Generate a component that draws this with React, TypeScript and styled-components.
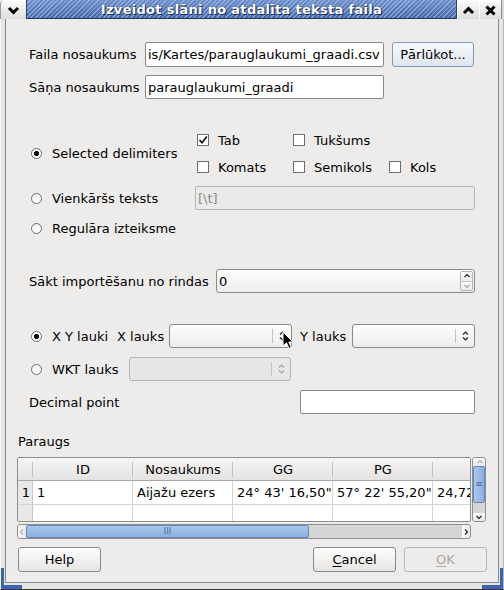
import styled, { createGlobalStyle } from "styled-components";
import { Fragment } from "react";

const GlobalStyle = createGlobalStyle`
  html, body { margin: 0; padding: 0; background: #ffffff; }
  body {
    font-family: "DejaVu Sans", "Liberation Sans", sans-serif;
    font-size: 13px;
    color: #000;
  }
  * { box-sizing: border-box; }
`;

const Window = styled.div`
  position: relative;
  width: 504px;
  height: 590px;
  display: flex;
  flex-direction: column;
  overflow: hidden;
`;

/* ---------- title bar ---------- */

const TitleBar = styled.div`
  display: flex;
  height: 19px;
  flex: none;
  background: #e4e3e1;
`;

const TitleButton = styled.div<{ $w: number; $first?: boolean }>`
  width: ${(p) => p.$w}px;
  height: 19px;
  display: flex;
  align-items: center;
  justify-content: center;
  background: linear-gradient(#fafafa, #dedddb);
  border-top: 1px solid #ffffff;
  border-left: 1px solid ${(p) => (p.$first ? "#9a9a9a" : "#ffffff")};
  border-top-left-radius: ${(p) => (p.$first ? "5px" : "0")};
`;

const TitleStripe = styled.div`
  flex: 1;
  height: 19px;
  display: flex;
  align-items: center;
  justify-content: center;
  border-left: 1px solid #23417a;
  border-right: 1px solid #23417a;
  border-bottom: 1px solid #1d3666;
  background:
    repeating-linear-gradient(135deg, rgba(255, 255, 255, 0) 0 2px, rgba(170, 195, 238, 0.6) 2px 3.2px),
    linear-gradient(#6f8fca, #4467a6);
  color: #ffffff;
  font-weight: bold;
  font-size: 13px;
  letter-spacing: 0.3px;
  text-shadow: 0 0 1px #17294d, 1px 1px 0 #1a2d55;
`;

const TitleEdge = styled.div`
  width: 3px;
  background: #d8d7d5;
  border-left: 1px solid #8d8d8d;
`;

/* ---------- frame and body ---------- */

const Frame = styled.div`
  position: relative;
  flex: 1;
  display: flex;
  padding: 0 4px 6px;
  background: #e6e5e3;
  border-left: 1px solid #f6f6f5;
  border-right: 1px solid #b8b7b5;
  border-bottom: 1px solid #3a3a3a;
`;

const Corner = styled.div<{ $side: "left" | "right" }>`
  position: absolute;
  bottom: 0;
  ${(p) => p.$side}: 0;
  width: 21px;
  height: 21px;
  border-bottom: 4px solid #3c63ad;
  border-${(p) => p.$side}: 3px solid #3c63ad;
`;

const Body = styled.div`
  flex: 1;
  display: flex;
  flex-direction: column;
  padding: 0 11px;
  background: #edeceb;
  border: 1px solid #8a8987;
  border-top: none;
`;

const Form = styled.div`
  display: flex;
  flex-direction: column;
  padding: 0 12px;
`;

const Row = styled.div<{ $top: number; $h: number }>`
  display: flex;
  align-items: center;
  margin-top: ${(p) => p.$top}px;
  height: ${(p) => p.$h}px;
`;

const Label = styled.span<{ $w?: number }>`
  flex: none;
  width: ${(p) => (p.$w ? `${p.$w}px` : "auto")};
  white-space: nowrap;
`;

const TextField = styled.div<{ $w?: number; $disabled?: boolean; $bare?: boolean }>`
  flex: ${(p) => (p.$w ? "none" : "1")};
  width: ${(p) => (p.$w ? `${p.$w}px` : "auto")};
  height: 100%;
  display: flex;
  align-items: center;
  padding: 0 4px 0 2px;
  overflow: hidden;
  white-space: nowrap;
  background: ${(p) => (p.$bare ? "transparent" : p.$disabled ? "#ebeae8" : "#ffffff")};
  border: ${(p) => (p.$bare ? "none" : `1px solid ${p.$disabled ? "#b6b5b3" : "#8b8a88"}`)};
  border-radius: 2px;
  color: ${(p) => (p.$disabled ? "#8d8c8a" : "#000")};
`;

const PushButton = styled.div<{ $w: number; $disabled?: boolean; $hover?: boolean }>`
  flex: none;
  width: ${(p) => p.$w}px;
  height: 100%;
  display: flex;
  align-items: center;
  justify-content: center;
  border: 1px solid ${(p) => (p.$disabled ? "#b9b8b6" : p.$hover ? "#8498b8" : "#8a8987")};
  border-radius: 3px;
  background: ${(p) =>
    p.$disabled
      ? "#edecea"
      : p.$hover
      ? "linear-gradient(#f7f9fc, #dfe5ee)"
      : "linear-gradient(#fdfdfd, #e6e5e3)"};
  color: ${(p) => (p.$disabled ? "#a9a8a6" : "#000")};
  u { text-decoration-thickness: 1px; text-underline-offset: 2px; }
`;

const Gap = styled.div<{ $w: number }>`
  flex: none;
  width: ${(p) => p.$w}px;
`;

/* ---------- radios and checkboxes ---------- */

const Choice = styled.span<{ $w?: number }>`
  flex: none;
  width: ${(p) => (p.$w ? `${p.$w}px` : "auto")};
  display: inline-flex;
  align-items: center;
  gap: 10px;
  padding-left: 2px;
  white-space: nowrap;
`;

const RadioDot = styled.span<{ $on?: boolean }>`
  flex: none;
  width: 11px;
  height: 11px;
  border-radius: 50%;
  border: 1px solid #6f6e6c;
  background: ${(p) =>
    p.$on
      ? "radial-gradient(circle, #111 0 2.3px, #ffffff 2.9px)"
      : "linear-gradient(#f2f2f2, #ffffff)"};
`;

const Box = styled.span`
  flex: none;
  width: 12px;
  height: 12px;
  display: flex;
  align-items: center;
  justify-content: center;
  border: 1px solid #6f6e6c;
  background: #ffffff;
`;

const Check = styled(Choice)`
  gap: 9px;
  padding-left: 0;
`;

const DelimGrid = styled.div`
  display: grid;
  grid-template-columns: 168px 96px 96px auto;
  grid-template-rows: 20px 20px;
  row-gap: 7px;
  align-items: center;
  margin-top: 31px;
`;

const SpanRows = styled.div`
  grid-row: 1 / span 2;
  grid-column: 1;
`;

/* ---------- combo and spin boxes ---------- */

const Combo = styled.div<{ $w?: number; $disabled?: boolean }>`
  flex: ${(p) => (p.$w ? "none" : "1")};
  width: ${(p) => (p.$w ? `${p.$w}px` : "auto")};
  height: 100%;
  display: flex;
  border: 1px solid ${(p) => (p.$disabled ? "#b6b5b3" : "#8b8a88")};
  border-radius: 3px;
  background: ${(p) => (p.$disabled ? "#e8e7e5" : "linear-gradient(#fdfdfd, #ededec)")};
`;

const ComboValue = styled.div`
  flex: 1;
  display: flex;
`;

const ComboArrow = styled.div`
  width: 19px;
  margin: 4px 0;
  border-left: 1px solid #c4c3c1;
  display: flex;
  align-items: center;
  justify-content: center;
`;

const SpinArrows = styled.div`
  width: 13px;
  margin: 1px 1px 1px 0;
  display: flex;
  flex-direction: column;
  border: 1px solid #b4b3b1;
  border-radius: 2px;
`;

const SpinHalf = styled.div<{ $lower?: boolean }>`
  flex: 1;
  display: flex;
  align-items: center;
  justify-content: center;
  background: linear-gradient(#fbfbfb, #ecebea);
  border-top: ${(p) => (p.$lower ? "1px solid #c9c8c6" : "none")};
`;

/* ---------- preview table ---------- */

const Caption = styled.div`
  margin-top: 19px;
  height: 16px;
  padding-left: 1px;
  display: flex;
  align-items: center;
`;

const TableRow = styled.div`
  display: flex;
  gap: 1px;
  margin-top: 8px;
  height: 65px;
`;

const TableView = styled.div`
  width: 454px;
  height: 100%;
  overflow: hidden;
  border: 1px solid #8f8e8c;
  border-radius: 2px;
  background: #ffffff;
`;

const Grid = styled.div`
  display: grid;
  grid-template-columns: 15px repeat(5, 100px);
  grid-template-rows: 23px 24px 48px;
`;

const HeadCell = styled.div`
  position: relative;
  display: flex;
  align-items: center;
  justify-content: center;
  white-space: nowrap;
  overflow: hidden;
  background: linear-gradient(#f6f5f4, #e4e3e1);
  border-bottom: 1px solid #a9a8a6;
  &::after {
    content: "";
    position: absolute;
    right: 0;
    top: 4px;
    bottom: 3px;
    width: 1px;
    background: #c3c2c0;
  }
`;

const RowHead = styled.div`
  display: flex;
  align-items: center;
  justify-content: flex-end;
  padding-right: 2px;
  background: #e9e8e6;
  border-right: 1px solid #c8c7c5;
  border-bottom: 1px solid #d5d4d2;
`;

const Cell = styled.div`
  display: flex;
  align-items: center;
  padding-left: 4px;
  white-space: nowrap;
  overflow: hidden;
  border-right: 1px solid #d5d4d2;
  border-bottom: 1px solid #d5d4d2;
`;

const VScroll = styled.div`
  width: 14px;
  height: 100%;
  display: flex;
  flex-direction: column;
  border: 1px solid #8f8e8c;
  border-radius: 3px;
  background: #d6d5d3;
  overflow: hidden;
`;

const HScroll = styled.div`
  width: 454px;
  height: 15px;
  margin-top: 2px;
  display: flex;
  border: 1px solid #8f8e8c;
  border-radius: 3px;
  background: #d6d5d3;
  overflow: hidden;
`;

const ScrollStep = styled.div<{ $size: number; $vertical?: boolean }>`
  flex: none;
  ${(p) => (p.$vertical ? "height" : "width")}: ${(p) => p.$size}px;
  display: flex;
  align-items: center;
  justify-content: center;
  background: linear-gradient(${(p) => (p.$vertical ? "90deg" : "180deg")}, #fbfbfb, #e9e8e6);
`;

const Thumb = styled.div<{ $size: number; $vertical?: boolean }>`
  flex: none;
  ${(p) => (p.$vertical ? "height" : "width")}: ${(p) => p.$size}px;
  display: flex;
  align-items: center;
  justify-content: center;
  border: 1px solid #6389c2;
  border-radius: 2px;
  background: linear-gradient(${(p) => (p.$vertical ? "90deg" : "180deg")}, #abc6ea, #8cafdf);
  color: #4c6fa6;
  font-size: 9px;
  line-height: 1;
`;

const Track = styled.div`
  flex: 1;
  background: #d6d5d3;
`;

/* ---------- dialog buttons ---------- */

const ButtonBar = styled.div`
  display: flex;
  gap: 8px;
  height: 25px;
  margin-top: 8px;
  padding-left: 1px;
`;

const Spacer = styled.div`
  flex: 1;
`;

const Pointer = styled.svg`
  position: absolute;
  left: 282px;
  top: 331px;
`;

/* ---------- small drawings ---------- */

const Chevron = ({ up }: { up?: boolean }) => (
  <svg width="13" height="9" viewBox="0 0 13 9">
    <path
      d={up ? "M2 7 L6.5 2.5 L11 7" : "M2 2 L6.5 6.5 L11 2"}
      fill="none"
      stroke="#000"
      strokeWidth="3"
    />
  </svg>
);

const CloseMark = () => (
  <svg width="11" height="11" viewBox="0 0 11 11">
    <path d="M1.5 1.5 L9.5 9.5 M9.5 1.5 L1.5 9.5" stroke="#000" strokeWidth="3" />
  </svg>
);

const UpDown = ({ color = "#222" }: { color?: string }) => (
  <svg width="7" height="12" viewBox="0 0 7 12">
    <path d="M1 4.5 L3.5 2 L6 4.5 M1 7.5 L3.5 10 L6 7.5" fill="none" stroke={color} strokeWidth="1.2" />
  </svg>
);

const Arrow = ({ dir, color = "#333" }: { dir: "up" | "down" | "left" | "right"; color?: string }) => {
  const d = {
    up: "M1.5 5 L4 2.5 L6.5 5",
    down: "M1.5 3 L4 5.5 L6.5 3",
    left: "M5 1.5 L2.5 4 L5 6.5",
    right: "M3 1.5 L5.5 4 L3 6.5",
  }[dir];
  return (
    <svg width="8" height="8" viewBox="0 0 8 8">
      <path d={d} fill="none" stroke={color} strokeWidth="1.2" />
    </svg>
  );
};

const Tick = () => (
  <svg width="10" height="10" viewBox="0 0 10 10">
    <path d="M1.5 5 L4 7.8 L8.8 1.5" fill="none" stroke="#111" strokeWidth="1.6" />
  </svg>
);

const Radio = ({ on, w, children }: { on?: boolean; w?: number; children: React.ReactNode }) => (
  <Choice $w={w}>
    <RadioDot $on={on} />
    {children}
  </Choice>
);

const CheckItem = ({ on, children }: { on?: boolean; children: React.ReactNode }) => (
  <Check>
    <Box>{on && <Tick />}</Box>
    {children}
  </Check>
);

const columns = ["", "ID", "Nosaukums", "GG", "PG", ""];
const rows = [
  ["1", "1", "Aijažu ezers", "24° 43' 16,50\"", "57° 22' 55,20\"", "24,72125"],
  ["2", "2", "Ālūksnes ezers", "27° 03' 01,10\"", "57° 25' 13,80\"", "27,05031"],
];

export default function App() {
  return (
    <>
      <GlobalStyle />
      <Window>
        <TitleBar>
          <TitleButton $w={26} $first>
            <Chevron />
          </TitleButton>
          <TitleStripe>Izveidot slāni no atdalīta teksta faila</TitleStripe>
          <TitleButton $w={22}>
            <Chevron up />
          </TitleButton>
          <TitleButton $w={22}>
            <CloseMark />
          </TitleButton>
          <TitleEdge />
        </TitleBar>

        <Frame>
          <Corner $side="left" />
          <Corner $side="right" />
          <Body>
            <Form>
              <Row $top={23} $h={25}>
                <Label $w={116}>Faila nosaukums</Label>
                <TextField $w={239}>is/Kartes/parauglaukumi_graadi.csv</TextField>
                <Gap $w={8} />
                <PushButton $w={82} $hover>
                  Pārlūkot...
                </PushButton>
              </Row>
              <Row $top={8} $h={24}>
                <Label $w={116}>Sāņa nosaukums</Label>
                <TextField $w={239}>parauglaukumi_graadi</TextField>
              </Row>

              <DelimGrid>
                <SpanRows>
                  <Radio on>Selected delimiters</Radio>
                </SpanRows>
                <CheckItem on>Tab</CheckItem>
                <CheckItem>Tukšums</CheckItem>
                <span />
                <CheckItem>Komats</CheckItem>
                <CheckItem>Semikols</CheckItem>
                <CheckItem>Kols</CheckItem>
              </DelimGrid>

              <Row $top={9} $h={24}>
                <Radio w={166}>Vienkāršs teksts</Radio>
                <TextField $disabled>[\t]</TextField>
              </Row>
              <Row $top={8} $h={20}>
                <Radio>Regulāra izteiksme</Radio>
              </Row>

              <Row $top={31} $h={24}>
                <Label $w={187}>Sākt importēšanu no rindas</Label>
                <Combo>
                  <ComboValue>
                    <TextField $bare>0</TextField>
                  </ComboValue>
                  <SpinArrows>
                    <SpinHalf>
                      <Arrow dir="up" color="#222" />
                    </SpinHalf>
                    <SpinHalf $lower>
                      <Arrow dir="down" color="#a6a5a3" />
                    </SpinHalf>
                  </SpinArrows>
                </Combo>
              </Row>

              <Row $top={31} $h={24}>
                <Radio on w={88}>
                  X Y lauki
                </Radio>
                <Label $w={52}>X lauks</Label>
                <Combo $w={123}>
                  <ComboValue />
                  <ComboArrow>
                    <UpDown />
                  </ComboArrow>
                </Combo>
                <Gap $w={8} />
                <Label $w={52}>Y lauks</Label>
                <Combo>
                  <ComboValue />
                  <ComboArrow>
                    <UpDown />
                  </ComboArrow>
                </Combo>
              </Row>
              <Row $top={9} $h={24}>
                <Radio w={100}>WKT lauks</Radio>
                <Combo $w={162} $disabled>
                  <ComboValue />
                  <ComboArrow>
                    <UpDown color="#a3a2a0" />
                  </ComboArrow>
                </Combo>
              </Row>
              <Row $top={9} $h={24}>
                <Label $w={271}>Decimal point</Label>
                <TextField />
              </Row>
            </Form>

            <Caption>Paraugs</Caption>
            <TableRow>
              <TableView>
                <Grid>
                  {columns.map((c, i) => (
                    <HeadCell key={i}>{c}</HeadCell>
                  ))}
                  {rows.map((r, ri) => (
                    <Fragment key={ri}>
                      <RowHead>{r[0]}</RowHead>
                      {r.slice(1).map((v, ci) => (
                        <Cell key={ci}>{v}</Cell>
                      ))}
                    </Fragment>
                  ))}
                </Grid>
              </TableView>
              <VScroll>
                <ScrollStep $size={13}>
                  <Arrow dir="up" color="#b0afad" />
                </ScrollStep>
                <Thumb $size={37} $vertical>
                  ≡
                </Thumb>
                <Track />
                <ScrollStep $size={12}>
                  <Arrow dir="down" color="#222" />
                </ScrollStep>
              </VScroll>
            </TableRow>
            <HScroll>
              <ScrollStep $size={14} $vertical>
                <Arrow dir="left" color="#b0afad" />
              </ScrollStep>
              <Thumb $size={283}>III</Thumb>
              <Track />
              <ScrollStep $size={14} $vertical>
                <Arrow dir="right" color="#222" />
              </ScrollStep>
            </HScroll>

            <ButtonBar>
              <PushButton $w={83}>Help</PushButton>
              <Spacer />
              <PushButton $w={83}>
                <span>
                  <u>C</u>ancel
                </span>
              </PushButton>
              <PushButton $w={83} $disabled>
                <span>
                  <u>O</u>K
                </span>
              </PushButton>
            </ButtonBar>
          </Body>
        </Frame>

        <Pointer width="13" height="19" viewBox="0 0 13 19">
          <path d="M1 1 L1 15 L4.5 11.8 L7 17.5 L9.2 16.5 L6.8 11 L11 11 Z" fill="#000" stroke="#fff" strokeWidth="1" />
        </Pointer>
      </Window>
    </>
  );
}
